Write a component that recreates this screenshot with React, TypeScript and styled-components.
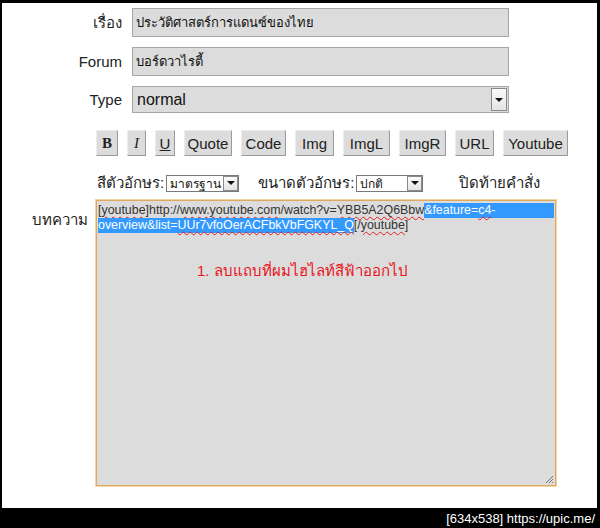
import styled, { createGlobalStyle } from "styled-components";

const GlobalStyle = createGlobalStyle`
  html, body {
    margin: 0;
    padding: 0;
    background: #000;
  }
  body {
    font-family: "Liberation Sans", Tahoma, sans-serif;
    color: #222;
  }
`;

const Frame = styled.div`
  width: 600px;
  height: 528px;
  box-sizing: border-box;
  padding: 3px 3px 0 2px;
  background: #000;
  display: flex;
  flex-direction: column;
`;

const Sheet = styled.div`
  height: 505px;
  box-sizing: border-box;
  padding-top: 5px;
  background: #fff;
  display: flex;
  flex-direction: column;
`;

const Caption = styled.div`
  height: 20px;
  display: flex;
  align-items: center;
  justify-content: flex-end;
  padding-right: 2px;
  color: #fff;
  font-size: 13px;
`;

const FieldRow = styled.div<{ $height: number }>`
  display: flex;
  align-items: center;
  height: ${({ $height }) => $height}px;
  margin-bottom: 10px;
`;

const FieldLabel = styled.div`
  width: 120px;
  padding-right: 10px;
  text-align: right;
  font-size: 15px;
  color: #222;
`;

const TextBox = styled.div`
  box-sizing: border-box;
  width: 377px;
  height: 100%;
  padding: 0 3px;
  display: flex;
  align-items: center;
  background: #dcdcdc;
  border: 1px solid #a6a6a6;
  font-size: 13px;
  color: #111;
`;

const SelectBox = styled(TextBox)`
  padding: 0 1px 0 4px;
  font-size: 16px;
  justify-content: space-between;
`;

const ArrowButton = styled.div<{ $size: number }>`
  box-sizing: border-box;
  width: ${({ $size }) => $size}px;
  height: ${({ $size }) => ($size > 15 ? "calc(100% - 2px)" : `${$size}px`)};
  display: flex;
  align-items: center;
  justify-content: center;
  background: linear-gradient(#fafafa, #e4e4e4);
  border: 1px solid #8a8a8a;

  &::after {
    content: "";
    border-left: 4px solid transparent;
    border-right: 4px solid transparent;
    border-top: 4px solid #111;
  }
`;

const Toolbar = styled.div`
  display: flex;
  gap: 9px;
  height: 26px;
  margin: 7px 0 18px 94px;
`;

const ToolButton = styled.div<{ $width: number; $look?: "bold" | "italic" | "under" }>`
  box-sizing: border-box;
  width: ${({ $width }) => $width}px;
  height: 26px;
  display: flex;
  align-items: center;
  justify-content: center;
  background: #dcdcdc;
  border: 1px solid;
  border-color: #ececec #9a9a9a #9a9a9a #ececec;
  font-size: 15px;
  color: #222;
  font-family: ${({ $look }) =>
    $look === "bold" || $look === "italic" ? '"Liberation Serif", serif' : '"Liberation Sans", sans-serif'};
  font-weight: ${({ $look }) => ($look === "bold" ? "bold" : "normal")};
  font-style: ${({ $look }) => ($look === "italic" ? "italic" : "normal")};
  text-decoration: ${({ $look }) => ($look === "under" ? "underline" : "none")};
`;

const OptionRow = styled.div`
  display: flex;
  align-items: center;
  height: 18px;
  margin: 0 0 8px 95px;
  font-size: 15px;
  color: #222;
`;

const OptionLabel = styled.span<{ $gapLeft: number }>`
  margin-left: ${({ $gapLeft }) => $gapLeft}px;
`;

const MiniSelect = styled.div<{ $width: number }>`
  box-sizing: border-box;
  width: ${({ $width }) => $width}px;
  height: 17px;
  margin-left: 2px;
  padding: 0 0 0 3px;
  display: flex;
  align-items: center;
  justify-content: space-between;
  background: #fff;
  border: 1px solid #7a7a7a;
  font-size: 12px;
  color: #111;
`;

const BodyRow = styled.div`
  display: flex;
  align-items: flex-start;
`;

const BodyLabel = styled.div`
  width: 86px;
  padding: 8px 8px 0 0;
  text-align: right;
  font-size: 15px;
  color: #222;
`;

const Editor = styled.div`
  position: relative;
  box-sizing: border-box;
  width: 460px;
  height: 286px;
  padding: 2px 1px;
  background: #dcdcdc;
  border: 1px solid #e0a85c;
  box-shadow: 0 0 0 1px #f3d6a8;
  font-size: 12.4px;
  line-height: 15px;
  color: #333;
`;

const Line = styled.div`
  display: flex;
  white-space: pre;
`;

const Picked = styled.span<{ $fill?: boolean }>`
  background: #3399ff;
  color: #fff;
  ${({ $fill }) => ($fill ? "flex: 1;" : "")}
`;

const Typo = styled.span`
  text-decoration: underline wavy #e02020;
  text-decoration-thickness: 1px;
  text-underline-offset: 2px;
`;

const Note = styled.div`
  position: absolute;
  left: 100px;
  top: 62px;
  font-size: 15px;
  color: #e8141c;
`;

const Grip = styled.svg`
  position: absolute;
  right: 1px;
  bottom: 1px;
`;

const tools: { text: string; width: number; look?: "bold" | "italic" | "under" }[] = [
  { text: "B", width: 22, look: "bold" },
  { text: "I", width: 19, look: "italic" },
  { text: "U", width: 20, look: "under" },
  { text: "Quote", width: 48 },
  { text: "Code", width: 45 },
  { text: "Img", width: 39 },
  { text: "ImgL", width: 47 },
  { text: "ImgR", width: 47 },
  { text: "URL", width: 39 },
  { text: "Youtube", width: 65 },
];

export default function App() {
  return (
    <>
      <GlobalStyle />
      <Frame>
        <Sheet>
          <FieldRow $height={29}>
            <FieldLabel>เรื่อง</FieldLabel>
            <TextBox>ประวัติศาสตร์การแดนซ์ของไทย</TextBox>
          </FieldRow>
          <FieldRow $height={29}>
            <FieldLabel>Forum</FieldLabel>
            <TextBox>บอร์ดวาไรตี้</TextBox>
          </FieldRow>
          <FieldRow $height={27}>
            <FieldLabel>Type</FieldLabel>
            <SelectBox>
              <span>normal</span>
              <ArrowButton $size={16} />
            </SelectBox>
          </FieldRow>

          <Toolbar>
            {tools.map((t) => (
              <ToolButton key={t.text} $width={t.width} $look={t.look}>
                {t.text}
              </ToolButton>
            ))}
          </Toolbar>

          <OptionRow>
            <OptionLabel $gapLeft={0}>สีตัวอักษร:</OptionLabel>
            <MiniSelect $width={73}>
              <span>มาตรฐาน</span>
              <ArrowButton $size={15} />
            </MiniSelect>
            <OptionLabel $gapLeft={19}>ขนาดตัวอักษร:</OptionLabel>
            <MiniSelect $width={67}>
              <span>ปกติ</span>
              <ArrowButton $size={15} />
            </MiniSelect>
            <OptionLabel $gapLeft={36}>ปิดท้ายคำสั่ง</OptionLabel>
          </OptionRow>

          <BodyRow>
            <BodyLabel>บทความ</BodyLabel>
            <Editor>
              <Line>
                <span>
                  [<Typo>youtube</Typo>]http://<Typo>www.youtube.com</Typo>/watch?v=<Typo>YBB5A2Q6Bbw</Typo>
                </span>
                <Picked $fill>
                  &amp;feature=<Typo>c4</Typo>-
                </Picked>
              </Line>
              <Line>
                <Picked>
                  overview&amp;list=<Typo>UUr7vfoOerACFbkVbFGKYL_Q</Typo>
                </Picked>
                <span>
                  [/<Typo>youtube</Typo>]
                </span>
              </Line>
              <Note>1. ลบแถบที่ผมไฮไลท์สีฟ้าออกไป</Note>
              <Grip width="10" height="10" viewBox="0 0 10 10">
                <path d="M9 2 L2 9 M9 5 L5 9 M9 8 L8 9" stroke="#777" strokeWidth="1" />
              </Grip>
            </Editor>
          </BodyRow>
        </Sheet>
        <Caption>[634x538] https://upic.me/</Caption>
      </Frame>
    </>
  );
}
